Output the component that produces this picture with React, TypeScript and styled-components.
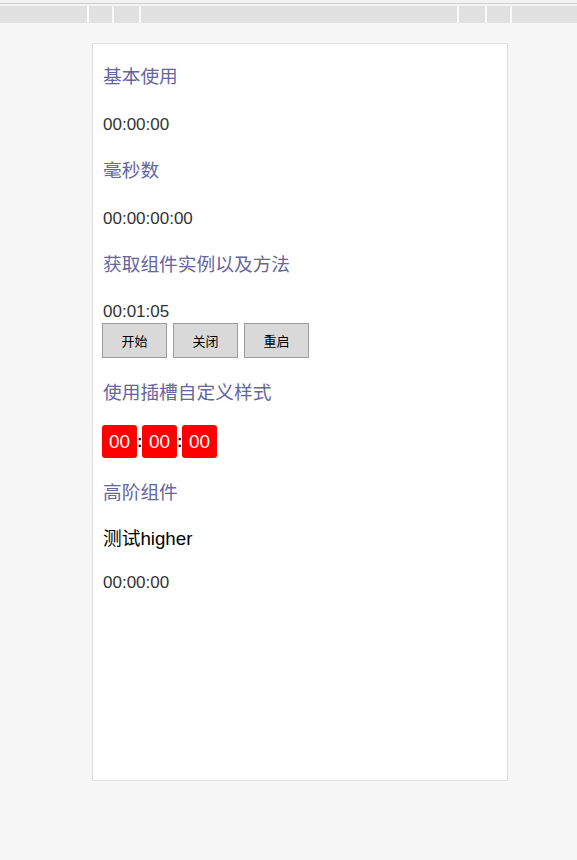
import React from "react";
import styled, { createGlobalStyle } from "styled-components";

const GlobalStyle = createGlobalStyle`
  html, body {
    margin: 0;
    padding: 0;
    background: #f7f7f7;
    font-family: "Liberation Sans", "Noto Sans CJK SC", sans-serif;
  }
`;

const TopBar = styled.div`
  padding-top: 3px;
  background: #f3f3f3;
`;

const TopLine = styled.div`
  border-top: 1px solid #cdcdcd;
  padding-top: 2px;
  background: #f4f4f4;
`;

const Segments = styled.div`
  display: flex;
  gap: 2px;
  height: 17px;
  background: #fafafa;
`;

const Segment = styled.div<{ $w?: number }>`
  background: #e1e1e1;
  ${(p) => (p.$w ? `width: ${p.$w}px;` : "flex: 1;")}
`;

const Card = styled.div`
  margin: 20px 0 0 92px;
  width: 416px;
  height: 738px;
  background: #fff;
  border: 1px solid #e2e2e2;
  padding: 21px 0 0 9px;
  box-sizing: border-box;
`;

const Title = styled.h3<{ $first?: boolean; $mb?: number }>`
  margin: ${(p) => (p.$first ? 0 : 23)}px 0 ${(p) => p.$mb ?? 25}px 1px;
  font-size: 18.72px;
  font-weight: 400;
  line-height: 24px;
  color: #65659f;
`;

const Time = styled.div`
  margin-left: 1px;
  font-size: 17px;
  line-height: 22px;
  color: #333;
`;

const Higher = styled.div`
  font-size: 18.72px;
  line-height: 22px;
  color: #000;
  margin: 0 0 22px 1px;
`;

const ButtonRow = styled.div`
  display: flex;
  gap: 6px;
`;

const Button = styled.button`
  width: 65px;
  height: 35px;
  padding: 0;
  background: #d9d9d9;
  border: 1px solid #9c9c9c;
  border-radius: 0;
  font-family: "Noto Sans CJK SC", sans-serif;
  font-size: 13px;
  color: #000;
`;

const SlotRow = styled.div`
  display: flex;
  align-items: center;
  height: 33px;
`;

const Digit = styled.span`
  display: flex;
  align-items: center;
  justify-content: center;
  width: 35px;
  height: 33px;
  background: #ff0000;
  border-radius: 3px;
  color: #fff;
  font-size: 19px;
`;

const Colon = styled.span`
  width: 5px;
  text-align: center;
  font-size: 16px;
  font-weight: 700;
  color: #000;
`;

export default function App() {
  return (
    <>
      <GlobalStyle />
      <TopBar>
        <TopLine>
          <Segments>
            <Segment $w={87} />
            <Segment $w={23} />
            <Segment $w={25} />
            <Segment $w={316} />
            <Segment $w={26} />
            <Segment $w={23} />
            <Segment />
          </Segments>
        </TopLine>
      </TopBar>
      <Card>
        <Title $first>基本使用</Title>
        <Time>00:00:00</Time>
        <Title>毫秒数</Title>
        <Time>00:00:00:00</Time>
        <Title $mb={24}>获取组件实例以及方法</Title>
        <Time>00:01:05</Time>
        <ButtonRow>
          <Button>开始</Button>
          <Button>关闭</Button>
          <Button>重启</Button>
        </ButtonRow>
        <Title $mb={20}>使用插槽自定义样式</Title>
        <SlotRow>
          <Digit>00</Digit>
          <Colon>:</Colon>
          <Digit>00</Digit>
          <Colon>:</Colon>
          <Digit>00</Digit>
        </SlotRow>
        <Title $mb={23}>高阶组件</Title>
        <Higher>测试higher</Higher>
        <Time>00:00:00</Time>
      </Card>
    </>
  );
}
